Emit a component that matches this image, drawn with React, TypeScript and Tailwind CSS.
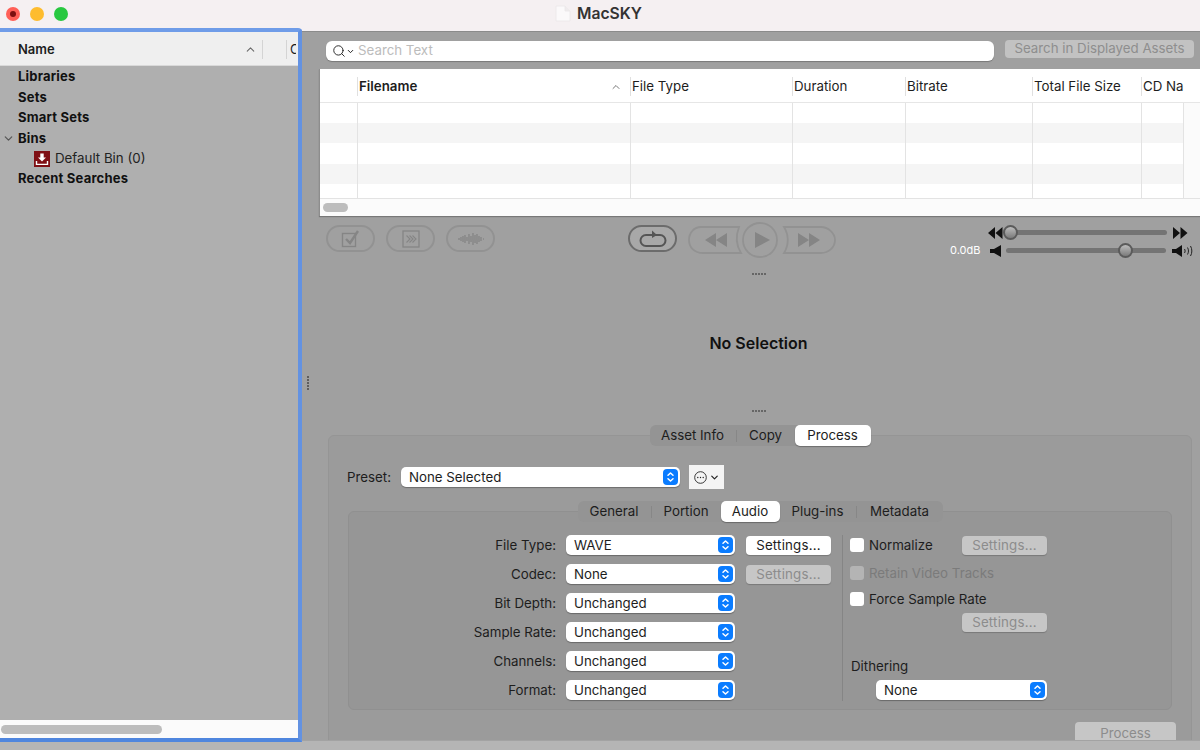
import { ChevronDown, ChevronUp, Search } from "lucide-react";

const COLS = ["w-[38px]", "w-[273px]", "w-[162px]", "w-[113px]", "w-[127px]", "w-[109px]", "w-[42px]"];
const HEADERS = [
  { label: "", bold: false },
  { label: "Filename", bold: true },
  { label: "File Type", bold: false },
  { label: "Duration", bold: false },
  { label: "Bitrate", bold: false },
  { label: "Total File Size", bold: false },
  { label: "CD Na", bold: false },
];
const ROWS = [
  { h: "h-[20px]", bg: "bg-white" },
  { h: "h-[20px]", bg: "bg-[#f5f5f5]" },
  { h: "h-[21px]", bg: "bg-white" },
  { h: "h-[20px]", bg: "bg-[#f5f5f5]" },
  { h: "h-[14px]", bg: "bg-white" },
];
const FORM_ROWS = [
  { label: "File Type:", value: "WAVE", settings: "on" },
  { label: "Codec:", value: "None", settings: "off" },
  { label: "Bit Depth:", value: "Unchanged", settings: "" },
  { label: "Sample Rate:", value: "Unchanged", settings: "" },
  { label: "Channels:", value: "Unchanged", settings: "" },
  { label: "Format:", value: "Unchanged", settings: "" },
];

function Stepper() {
  return (
    <span className="flex h-[16px] w-[15px] shrink-0 items-center justify-center rounded-[4px] bg-[#0a7cff]">
      <svg width="9" height="12" viewBox="0 0 9 12" fill="none" stroke="white" strokeWidth="1.5" strokeLinecap="round" strokeLinejoin="round">
        <path d="M2 4.3 4.5 2 7 4.3" />
        <path d="M2 7.7 4.5 10 7 7.7" />
      </svg>
    </span>
  );
}

function Select({ value, width }: { value: string; width: string }) {
  return (
    <div className={`flex h-[20px] shrink-0 items-center justify-between rounded-[5px] bg-white pl-[8px] pr-[2px] text-[13.3px] text-[#1d1d1d] shadow-[0_1px_1px_rgba(0,0,0,0.3)] ${width}`}>
      <span className="pt-[1px]">{value}</span>
      <Stepper />
    </div>
  );
}

function SettingsButton({ enabled }: { enabled: boolean }) {
  return (
    <div
      className={`flex h-[19px] w-[85px] shrink-0 items-center justify-center rounded-[4px] pt-[1px] text-[13.3px] tracking-[0.2px] shadow-[0_1px_1px_rgba(0,0,0,0.2)] ${
        enabled ? "bg-white text-[#1d1d1d]" : "bg-[#c6c6c6] text-[#8c8c8c]"
      }`}
    >
      Settings...
    </div>
  );
}

function CheckRow({ label, enabled = true }: { label: string; enabled?: boolean }) {
  return (
    <div className="flex items-center gap-[5px]">
      <span className={`h-[14px] w-[14px] rounded-[3px] ${enabled ? "bg-white" : "bg-[#b4b4b4]"}`} />
      <span className={`pt-[1px] text-[13.3px] ${enabled ? "text-[#1d1d1d]" : "text-[#7b7b7b]"}`}>{label}</span>
    </div>
  );
}

function Tabs({ items, active }: { items: { label: string; w: string }[]; active: string }) {
  return (
    <div className="relative z-10 flex h-[21px] justify-center">
      <div className="flex rounded-[6px] bg-[#949494] text-[13.3px] text-[#1d1d1d]">
        {items.map((t, i) => {
          const on = t.label === active;
          const next = items[i + 1];
          const showSep = next && !on && next.label !== active;
          return (
            <div key={t.label} className={`flex items-center ${t.w}`}>
              <div
                className={`flex h-full flex-1 items-center justify-center pt-[1px] ${
                  on ? "rounded-[5px] bg-white shadow-[0_1px_1px_rgba(0,0,0,0.3)]" : ""
                }`}
              >
                {t.label}
              </div>
              {showSep && <span className="h-[12px] border-r border-[#878787]" />}
            </div>
          );
        })}
      </div>
    </div>
  );
}

function Handle() {
  return (
    <div className="ml-[16px] flex justify-center gap-[1px]">
      {[0, 1, 2, 3, 4].map((d) => (
        <span key={d} className="h-[2px] w-[2px] bg-[#666]" />
      ))}
    </div>
  );
}

function PillIcon({ dark, children }: { dark?: boolean; children: React.ReactNode }) {
  return (
    <div
      className={`flex h-[27px] w-[49px] items-center justify-center rounded-full border-2 ${
        dark ? "border-[#6c6c6c] bg-[#a8a8a8]" : "border-[#929292] bg-[#a0a0a0]"
      }`}
    >
      {children}
    </div>
  );
}

function Slider({ pos }: { pos: string }) {
  return (
    <div className="relative h-[5px] rounded-full bg-[#747474]">
      <span className={`absolute top-[-5px] h-[15px] w-[15px] rounded-full border-2 border-[#5b5b5b] bg-linear-to-b from-[#bdbdbd] to-[#7c7c7c] ${pos}`} />
    </div>
  );
}

export default function App() {
  return (
    <div className="flex h-[750px] w-[1200px] flex-col overflow-hidden bg-[#b5b5b5] font-['Inter','Liberation_Sans',sans-serif]">
      {/* Title bar */}
      <div className="flex h-[31px] shrink-0 items-start bg-[#f5f0f2]">
        <div className="flex w-[555px] gap-[10px] pl-[6px] pt-[7px]">
          <span className="flex h-[14px] w-[14px] items-center justify-center rounded-full bg-[#ff5f57]">
            <span className="h-[6px] w-[6px] rounded-full bg-[#7c1010]" />
          </span>
          <span className="h-[14px] w-[14px] rounded-full bg-[#febc2e]" />
          <span className="h-[14px] w-[14px] rounded-full bg-[#28c840]" />
        </div>
        <svg className="mt-[5px]" width="16" height="17" viewBox="0 0 16 17" fill="none">
          <path d="M1 1h9l5 5v10H1z" fill="#fbf9fa" stroke="#ebe7e9" strokeWidth="0.8" />
          <path d="M10 1v5h5" fill="#efebed" stroke="#ebe7e9" strokeWidth="0.8" />
        </svg>
        <span className="ml-[6px] mt-[5px] text-[15.7px] font-semibold leading-[18px] text-[#333]">MacSKY</span>
      </div>

      <div className="flex h-[709px] shrink-0">
        {/* Sidebar */}
        <div className="relative z-20 mt-[-3px] flex h-[714px] w-[302px] shrink-0 flex-col rounded-tr-[4px] border-y-[4px] border-r-[4px] border-t-[#6f9ce8] border-r-[#6392e2] border-b-[#4f86de]">
          <div className="flex h-[34px] shrink-0 items-center border-b border-[#d9d9d9] bg-[#efefef] pl-[18px] pt-[2px] text-[13px] font-semibold text-[#1d1d1d]">
            <span className="w-[226px]">Name</span>
            <ChevronUp size={13} className="text-[#6a6a6a]" />
            <span className="ml-[5px] h-[19px] border-l border-[#d4d4d4]" />
            <span className="ml-[23px] h-[19px] border-l border-[#d4d4d4]" />
            <span className="ml-[3px] w-[6px] overflow-hidden font-normal">C</span>
          </div>
          <div className="flex flex-1 flex-col bg-[#afafaf] pt-[1px] text-[13px] tracking-[0.2px] text-[#111]">
            <div className="flex h-[20.4px] items-center pl-[18px] font-bold">Libraries</div>
            <div className="flex h-[20.4px] items-center pl-[18px] font-bold">Sets</div>
            <div className="flex h-[20.4px] items-center pl-[18px] font-bold">Smart Sets</div>
            <div className="flex h-[20.4px] items-center pl-[2px] font-bold">
              <ChevronDown size={13} strokeWidth={2.2} className="mr-[3px] text-[#555]" />
              Bins
            </div>
            <div className="flex h-[20.4px] items-center pl-[34px]">
              <svg className="mr-[5px]" width="16" height="16" viewBox="0 0 16 16">
                <rect width="16" height="16" fill="#7f0f14" />
                <path d="M6.3 2.5h3.4v4h2.3L8 10.4 4 6.5h2.3z" fill="white" />
                <path d="M2.5 10v3.4h11V10" fill="none" stroke="white" strokeWidth="1.4" />
              </svg>
              <span className="text-[13.3px] tracking-normal text-[#222]">Default Bin (0)</span>
            </div>
            <div className="flex h-[20.4px] items-center pl-[18px] font-bold">Recent Searches</div>
          </div>
          <div className="flex h-[18px] shrink-0 items-center bg-[#fbfbfb] pl-[1px]">
            <span className="h-[9px] w-[161px] rounded-full bg-[#bdbdbd]" />
          </div>
        </div>

        {/* Main */}
        <div className="relative flex h-[709px] w-[898px] flex-col overflow-hidden border-t border-[#8b8b8b] bg-[#a0a0a0]">
          {/* pane splitter dots */}
          <div className="absolute left-[5px] top-[344px] flex flex-col gap-[1px]">
            {[0, 1, 2, 3, 4].map((d) => (
              <span key={d} className="h-[2px] w-[2px] bg-[#5e5e5e]" />
            ))}
          </div>

          {/* Search row */}
          <div className="flex h-[37px] shrink-0 items-start pl-[24px] pt-[8px]">
            <div className="mt-[1px] flex h-[20px] w-[668px] items-center rounded-[6px] bg-white pl-[6px] shadow-[0_1px_1px_rgba(0,0,0,0.25)]">
              <Search size={14} strokeWidth={1.6} className="text-[#222]" />
              <ChevronDown size={9} strokeWidth={2.6} className="text-[#222]" />
              <span className="ml-[3px] text-[13.3px] text-[#bcbcbc]">Search Text</span>
            </div>
            <div className="ml-[11px] flex h-[18px] w-[189px] items-center justify-center rounded-[4px] bg-[#c2c2c2] text-[13.3px] text-[#8e8e8e]">
              Search in Displayed Assets
            </div>
          </div>

          {/* Asset table */}
          <div className="ml-[17px] flex h-[147px] shrink-0 flex-col border-l border-[#8d8d8d] bg-[#fbfbfb] shadow-[0_1px_1px_rgba(0,0,0,0.25)]">
            <div className="flex h-[34px] shrink-0 items-center border-b border-[#e6e6e6] bg-white pt-[2px] text-[13.3px] text-[#1d1d1d]">
              {HEADERS.map((h, i) => (
                <div key={i} className={`flex h-[19px] items-center overflow-hidden whitespace-nowrap border-r border-[#e0e0e0] pl-[1px] last:border-r-0 ${COLS[i]} ${h.bold ? "font-semibold" : ""}`}>
                  {h.label}
                  {h.bold && <ChevronUp size={12} className="ml-[193px] text-[#777]" />}
                </div>
              ))}
            </div>
            {ROWS.map((r, ri) => (
              <div key={ri} className={`flex shrink-0 ${r.h}`}>
                {COLS.map((c, ci) => (
                  <div key={ci} className={`border-r border-[#e3e3e3] ${c} ${r.bg}`} />
                ))}
              </div>
            ))}
            <div className="flex flex-1 items-center border-t border-[#e3e3e3] pl-[3px]">
              <span className="h-[9px] w-[25px] rounded-full bg-[#bdbdbd]" />
            </div>
          </div>

          {/* Transport */}
          <div className="flex h-[50px] shrink-0 items-start">
            <div className="ml-[24px] mt-[9px] flex gap-[11px]">
              <PillIcon>
                <svg width="22" height="20" viewBox="0 0 22 20" fill="none" stroke="#858585">
                  <rect x="2.5" y="4.5" width="13" height="13" strokeWidth="1.4" />
                  <path d="M6 10l4 4 8-12" strokeWidth="2.4" />
                </svg>
              </PillIcon>
              <PillIcon>
                <svg width="18" height="18" viewBox="0 0 18 18" fill="none" stroke="#858585">
                  <rect x="1" y="1" width="16" height="16" strokeWidth="1.3" />
                  <path d="M4.5 5.5 8 9l-3.5 3.5M7.5 5.5 11 9l-3.5 3.5M10.5 5.5 14 9l-3.5 3.5" strokeWidth="1.1" />
                </svg>
              </PillIcon>
              <PillIcon>
                <svg width="30" height="16" viewBox="0 0 30 16" fill="none" stroke="#868686" strokeWidth="1.4">
                  <path d="M2 8h2M5 6v4M7 5v6M9 4v8M11 6v4M13 3v10M15 5v6M17 2v12M19 4v8M21 3v10M23 5v6M25 6v4M27 8h1" />
                </svg>
              </PillIcon>
            </div>
            <div className="ml-[133px] mt-[9px]">
              <PillIcon dark>
                <svg width="30" height="20" viewBox="0 0 30 20" fill="none" stroke="#555">
                  <rect x="2.5" y="6" width="25" height="11" rx="5.5" strokeWidth="2" />
                  <path d="M14 1.5l5 4.500-5 3z" fill="#555" stroke="none" />
                </svg>
              </PillIcon>
            </div>
            <svg className="ml-[10px] mt-[6px]" width="150" height="36" viewBox="0 0 150 36">
              <path d="M52 5H14C7 5 2 11 2 18s5 13 14 13h38c-5-8-5-18-2-26z" fill="#a0a0a0" stroke="#929292" strokeWidth="1.8" />
              <path d="M97 5h37c7 0 14 6 14 13s-6 13-14 13H97c5-8 5-18 0-26z" fill="#a0a0a0" stroke="#929292" strokeWidth="1.8" />
              <circle cx="73" cy="18" r="17" fill="#a0a0a0" stroke="#929292" strokeWidth="1.8" />
              <path d="M68 10l15 8-15 8z" fill="#858585" />
              <path d="M29 11l-11 7 11 7zM40 11l-11 7 11 7z" fill="#858585" />
              <path d="M111 11l11 7-11 7zM122 11l11 7-11 7z" fill="#858585" />
            </svg>
            <div className="ml-[113px] mt-[11px] flex flex-col gap-[7px]">
              <div className="flex h-[11px] items-center">
                <span className="w-[38px]" />
                <svg width="15" height="12" viewBox="0 0 15 12" fill="#111">
                  <path d="M7 0v12L0 6zM14.500 0v12L7.500 6z" />
                </svg>
                <div className="ml-[6px] w-[158px]">
                  <Slider pos="left-[-6px]" />
                </div>
                <svg className="ml-[6px]" width="15" height="12" viewBox="0 0 15 12" fill="#111">
                  <path d="M0 0v12l7-6zM7.500 0v12l7-6z" />
                </svg>
              </div>
              <div className="flex h-[11px] items-center">
                <span className="w-[35px] text-[11px] text-white">0.0dB</span>
                <svg className="ml-[5px]" width="12" height="12" viewBox="0 0 12 12" fill="#111">
                  <path d="M0 4h4l7-4v12l-7-4H0z" />
                </svg>
                <div className="ml-[4px] w-[160px]">
                  <Slider pos="left-[112px]" />
                </div>
                <svg className="ml-[6px]" width="22" height="12" viewBox="0 0 22 12" fill="#111">
                  <path d="M0 4h4l6-4v12L4 8H0z" />
                  <path d="M12.500 4c.8 1.300.8 2.700 0 4M15.500 2.500c1.300 2.200 1.300 4.800 0 7M18.500 1c1.800 3 1.800 7 0 10" fill="none" stroke="#222" strokeWidth="1" />
                </svg>
              </div>
            </div>
          </div>

          <div className="mt-[7px]">
            <Handle />
          </div>

          <div className="ml-[15px] flex h-[135px] shrink-0 items-center justify-center">
            <span className="mt-[1px] text-[16px] font-semibold text-[#111]">No Selection</span>
          </div>

          <Handle />

          {/* Process panel */}
          <div className="ml-[26px] mt-[13px] w-[864px]">
            <Tabs
              active="Process"
              items={[
                { label: "Asset Info", w: "w-[87px]" },
                { label: "Copy", w: "w-[58px]" },
                { label: "Process", w: "w-[76px]" },
              ]}
            />
            <div className="-mt-[11px] h-[320px] rounded-[6px] border border-[#959595] bg-[#9b9b9b] px-[19px] pt-[29px]">
              <div className="-ml-[1px] flex h-[24px] items-center">
                <span className="w-[54px] pt-[1px] text-[13.3px] text-[#1d1d1d]">Preset:</span>
                <Select value="None Selected" width="w-[279px]" />
                <div className="ml-[9px] flex h-[24px] w-[35px] items-center justify-center gap-[2px] bg-[#f4f4f4]">
                  <svg width="13" height="13" viewBox="0 0 13 13" fill="none" stroke="#222">
                    <circle cx="6.500" cy="6.500" r="5.800" strokeWidth="0.9" />
                    <circle cx="3.800" cy="6.500" r="0.700" fill="#222" stroke="none" />
                    <circle cx="6.500" cy="6.500" r="0.700" fill="#222" stroke="none" />
                    <circle cx="9.200" cy="6.500" r="0.700" fill="#222" stroke="none" />
                  </svg>
                  <ChevronDown size={11} strokeWidth={2.6} className="text-[#222]" />
                </div>
              </div>

              <div className="mt-[12px]">
                <Tabs
                  active="Audio"
                  items={[
                    { label: "General", w: "w-[74px]" },
                    { label: "Portion", w: "w-[69px]" },
                    { label: "Audio", w: "w-[59px]" },
                    { label: "Plug-ins", w: "w-[77px]" },
                    { label: "Metadata", w: "w-[86px]" },
                  ]}
                />
                <div className="-mt-[11px] flex h-[199px] rounded-[6px] border border-[#909090] bg-[#969696] pt-[23px]">
                  <div className="flex h-[166px] w-[494px] shrink-0 flex-col gap-[9px] border-r border-[#858585]">
                    {FORM_ROWS.map((row) => (
                      <div key={row.label} className="flex h-[20px] items-center">
                        <span className="w-[207px] pt-[1px] text-right text-[13.3px] text-[#1d1d1d]">{row.label}</span>
                        <span className="w-[10px]" />
                        <Select value={row.value} width="w-[169px]" />
                        {row.settings !== "" && (
                          <span className="ml-[11px]">
                            <SettingsButton enabled={row.settings === "on"} />
                          </span>
                        )}
                      </div>
                    ))}
                  </div>
                  <div className="flex flex-col pl-[7px]">
                    <div className="flex h-[20px] items-center">
                      <span className="w-[112px]">
                        <CheckRow label="Normalize" />
                      </span>
                      <SettingsButton enabled={false} />
                    </div>
                    <div className="mt-[8px] flex h-[20px] items-center">
                      <CheckRow label="Retain Video Tracks" enabled={false} />
                    </div>
                    <div className="mt-[6px] flex h-[20px] items-center">
                      <CheckRow label="Force Sample Rate" />
                    </div>
                    <div className="ml-[112px] mt-[4px]">
                      <SettingsButton enabled={false} />
                    </div>
                    <span className="ml-[1px] mt-[26px] text-[13.3px] leading-[16px] text-[#1d1d1d]">Dithering</span>
                    <div className="ml-[26px] mt-[6px]">
                      <Select value="None" width="w-[171px]" />
                    </div>
                  </div>
                </div>
              </div>

              <div className="ml-[727px] mt-[12px] flex h-[24px] w-[101px] items-center justify-center rounded-[4px] bg-[#c6c6c6] text-[13.3px] text-[#8c8c8c]">
                Process
              </div>
            </div>
          </div>
        </div>
      </div>

      <div className="h-[10px] shrink-0 border-t border-[#a3a3a3] bg-[#b5b5b5]" />
    </div>
  );
}
